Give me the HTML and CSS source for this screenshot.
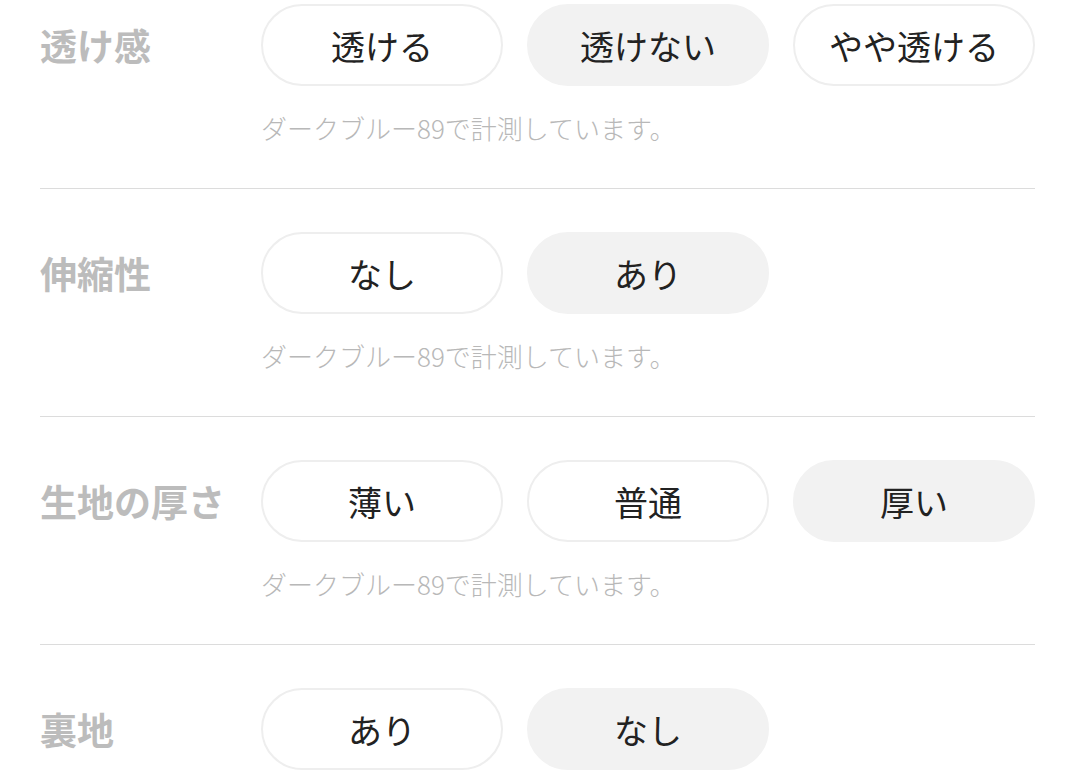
FILE: index.html
```html
<!DOCTYPE html>
<html lang="ja">
<head>
<meta charset="utf-8">
<link rel="stylesheet" href="styles.css">
</head>
<body>
<div class="specs">
  <section class="spec">
    <div class="spec-line">
      <h3 class="spec-label">透け感</h3>
      <div class="options">
        <span class="opt">透ける</span>
        <span class="opt opt-on">透けない</span>
        <span class="opt">やや透ける</span>
      </div>
    </div>
    <p class="spec-note">ダークブルー89で計測しています。</p>
  </section>
  <section class="spec">
    <div class="spec-line">
      <h3 class="spec-label">伸縮性</h3>
      <div class="options">
        <span class="opt">なし</span>
        <span class="opt opt-on">あり</span>
      </div>
    </div>
    <p class="spec-note">ダークブルー89で計測しています。</p>
  </section>
  <section class="spec">
    <div class="spec-line">
      <h3 class="spec-label">生地の厚さ</h3>
      <div class="options">
        <span class="opt">薄い</span>
        <span class="opt">普通</span>
        <span class="opt opt-on">厚い</span>
      </div>
    </div>
    <p class="spec-note">ダークブルー89で計測しています。</p>
  </section>
  <section class="spec">
    <div class="spec-line">
      <h3 class="spec-label">裏地</h3>
      <div class="options">
        <span class="opt">あり</span>
        <span class="opt opt-on">なし</span>
      </div>
    </div>
  </section>
</div>
</body>
</html>
```

FILE: styles.css
```css
html, body {
  margin: 0;
  padding: 0;
  background: #fff;
}
body {
  font-family: "Noto Sans CJK JP", "Noto Sans", sans-serif;
  color: #222;
  overflow: hidden;
}
.specs {
  padding: 0 42px 0 40px;
}
.spec {
  padding: 43px 0 42px;
  border-bottom: 1px solid #dcdcdc;
}
.spec:first-child {
  padding-top: 4px;
}
.spec:last-child {
  border-bottom: none;
}
.spec-line {
  display: flex;
  align-items: center;
}
.spec-label {
  margin: 0;
  width: 221px;
  flex: none;
  font-size: 37px;
  font-weight: 700;
  color: #bcbcbc;
  line-height: 1;
  white-space: nowrap;
}
.options {
  display: flex;
  gap: 24px;
}
.opt {
  box-sizing: border-box;
  width: 242px;
  height: 82px;
  border: 2px solid #eeeeee;
  border-radius: 41px;
  display: flex;
  align-items: center;
  justify-content: center;
  font-size: 34px;
  color: #222;
  background: #fff;
}
.opt-on {
  background: #f2f2f2;
  border-color: #f2f2f2;
}
.spec-note {
  margin: 24px 0 0 221px;
  font-size: 26px;
  line-height: 36px;
  font-weight: 300;
  color: #b8b8b8;
}
```
